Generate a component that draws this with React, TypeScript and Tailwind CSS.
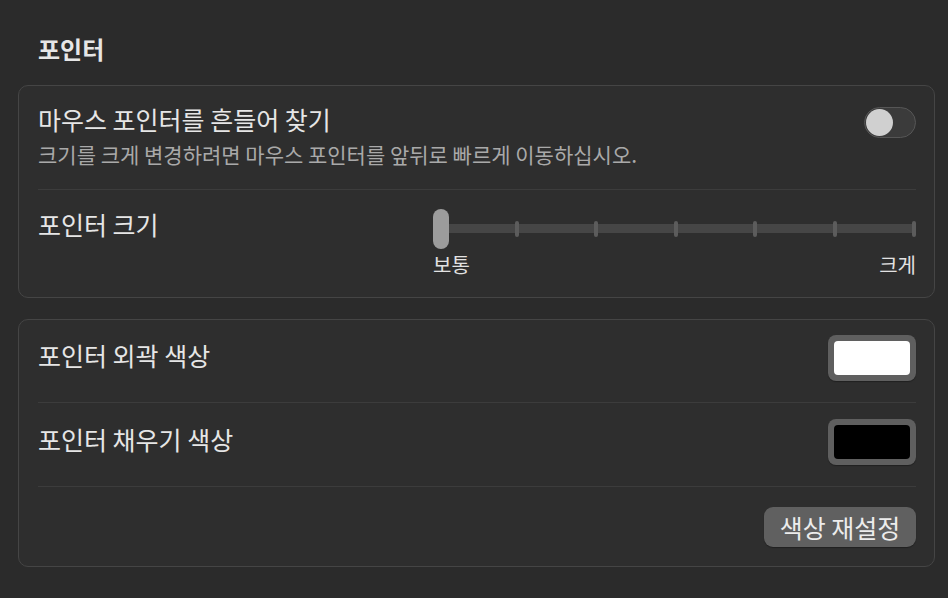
import React from "react";

const ticks = [0, 1, 2, 3, 4, 5, 6];

const Toggle = () => (
  <div className="w-[52px] h-[31px] rounded-full bg-[#3b3b3b] border border-[#565656] flex items-center px-[1px]">
    <div className="w-[27px] h-[27px] rounded-full bg-[#d0d0d0]" />
  </div>
);

const SizeSlider = () => (
  <div className="w-[483px] flex flex-col">
    <div className="relative h-[40px]">
      <div className="absolute left-[8px] right-0 top-[15px] h-[9px] bg-[#464646]" />
      <div className="absolute left-[2px] right-0 top-[12px] h-[16px] flex justify-between">
        {ticks.map((t) => (
          <div key={t} className="w-[4px] h-[16px] rounded-[2px] bg-[#5c5c5c]" />
        ))}
      </div>
      <div className="absolute left-0 top-0 w-[16px] h-[40px] rounded-full bg-[#9c9c9c]" />
    </div>
    <div className="flex justify-between mt-[3px] text-[20px] leading-[26px] text-[#e2e2e2]">
      <span>보통</span>
      <span>크게</span>
    </div>
  </div>
);

const Swatch = ({ color }: { color: string }) => (
  <div className="w-[88px] h-[46px] rounded-[8px] bg-[#5f5f5f] p-[6px] shadow-[0_1px_1px_rgba(0,0,0,0.3)]">
    <div className={`w-full h-full rounded-[4px] ${color}`} />
  </div>
);

export default function App() {
  return (
    <div className="w-[948px] h-[598px] bg-[#2b2b2b] pl-[18px] pr-[13px] pt-[32px] font-['Noto_Sans_CJK_KR',sans-serif] text-[#e6e6e6]">
      <h1 className="px-[20px] text-[24px] leading-[34px] font-bold">포인터</h1>

      <div className="mt-[19px] rounded-[10px] border border-[#454545] bg-[#2e2e2e] pl-[19px] pr-[18px]">
        <div className="h-[104px] flex justify-between pt-[18px] border-b border-[#3c3c3c]">
          <div className="flex flex-col">
            <span className="text-[25px] leading-[30px]">마우스 포인터를 흔들어 찾기</span>
            <span className="text-[21px] leading-[28px] text-[#a9a9a9] mt-[6px]">
              크기를 크게 변경하려면 마우스 포인터를 앞뒤로 빠르게 이동하십시오.
            </span>
          </div>
          <div className="pt-[3px]">
            <Toggle />
          </div>
        </div>
        <div className="h-[107px] flex justify-between pt-[19px]">
          <span className="text-[25px] leading-[30px]">포인터 크기</span>
          <SizeSlider />
        </div>
      </div>

      <div className="mt-[21px] rounded-[10px] border border-[#454545] bg-[#2e2e2e] pl-[19px] pr-[18px]">
        <div className="h-[83px] flex items-start justify-between border-b border-[#3c3c3c]">
          <span className="text-[25px] leading-[30px] pt-[20px]">포인터 외곽 색상</span>
          <div className="pt-[15px]">
            <Swatch color="bg-white" />
          </div>
        </div>
        <div className="h-[84px] flex items-start justify-between border-b border-[#3c3c3c]">
          <span className="text-[25px] leading-[30px] pt-[21px]">포인터 채우기 색상</span>
          <div className="pt-[16px]">
            <Swatch color="bg-black" />
          </div>
        </div>
        <div className="h-[79px] flex items-start justify-end pt-[20px]">
          <button className="w-[152px] h-[40px] rounded-[9px] bg-[#606060] text-[25px] leading-[30px] text-[#ececec] shadow-[0_1px_1px_rgba(0,0,0,0.3)]">
            색상 재설정
          </button>
        </div>
      </div>
    </div>
  );
}
